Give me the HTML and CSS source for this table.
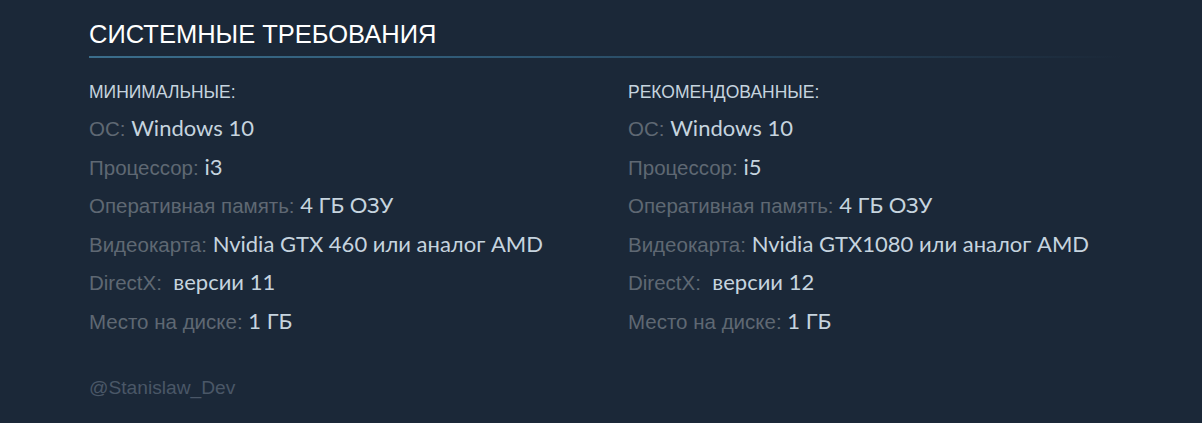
FILE: index.html
```html
<!DOCTYPE html>
<html lang="ru">
<head>
    <meta charset="UTF-8">
    <meta name="viewport" content="width=device-width, initial-scale=1.0">
    <title>Системные требования</title>
    <link rel="stylesheet" href="styles.css">
</head>
<body>
    <section class="sysreq">
        <h2 class="sysreq-title">СИСТЕМНЫЕ ТРЕБОВАНИЯ</h2>

        <div class="sysreq-cols">
            <div class="sysreq-col">
                <h3>МИНИМАЛЬНЫЕ:</h3>
                <ul>
                    <li><span class="label">ОС:</span> <span class="value">Windows 10</span></li>
                    <li><span class="label">Процессор:</span> <span class="value">i3</span></li>
                    <li><span class="label">Оперативная память:</span> <span class="value">4 ГБ ОЗУ</span></li>
                    <li><span class="label">Видеокарта:</span> <span class="value">Nvidia GTX 460 или аналог AMD</span></li>
                    <li><span class="label">DirectX:</span> &nbsp;<span class="value">версии 11</span></li>
                    <li><span class="label">Место на диске:</span> <span class="value">1 ГБ</span></li>
                </ul>
            </div>
            <div class="sysreq-col">
                <h3>РЕКОМЕНДОВАННЫЕ:</h3>
                <ul>
                    <li><span class="label">ОС:</span> <span class="value">Windows 10</span></li>
                    <li><span class="label">Процессор:</span> <span class="value">i5</span></li>
                    <li><span class="label">Оперативная память:</span> <span class="value">4 ГБ ОЗУ</span></li>
                    <li><span class="label">Видеокарта:</span> <span class="value">Nvidia GTX1080 или аналог AMD</span></li>
                    <li><span class="label">DirectX:</span> &nbsp;<span class="value">версии 12</span></li>
                    <li><span class="label">Место на диске:</span> <span class="value">1 ГБ</span></li>
                </ul>
            </div>
        </div>

        <p class="author">@Stanislaw_Dev</p>
    </section>
</body>
</html>
```

FILE: styles.css
```css
body {
    margin: 0;
    background-color: #1b2838;
    font-family: "Liberation Sans", Arial, sans-serif;
}

.sysreq {
    padding: 20px 0 0 89px;
    width: 1032px;
}

.sysreq-title {
    margin: 0;
    padding-bottom: 7px;
    font-size: 25.5px;
    line-height: 29px;
    font-weight: normal;
    color: #ffffff;
    border-bottom: 2px solid transparent;
    border-image: linear-gradient(to right, #3b6e8c 0%, #2f5874 40%, rgba(27, 40, 56, 0) 100%) 1;
}

.sysreq-cols {
    display: grid;
    grid-template-columns: 539px 1fr;
    margin-top: 24px;
}

.sysreq-col h3 {
    margin: 0 0 12px;
    font-size: 17.5px;
    line-height: 20px;
    font-weight: normal;
    color: #c6d4df;
}

.sysreq-col ul {
    list-style: none;
    margin: 0;
    padding: 0;
}

.sysreq-col li {
    height: 38.6px;
    line-height: 28px;
    font-size: 20.5px;
    white-space: nowrap;
}

.label {
    color: #5f6873;
}

.value {
    font-family: Lato, "Liberation Sans", sans-serif;
    font-size: 22px;
    color: #c6d4df;
}

.author {
    margin: 31px 0 0;
    font-size: 19.2px;
    line-height: 22px;
    color: #4a5767;
}
```
